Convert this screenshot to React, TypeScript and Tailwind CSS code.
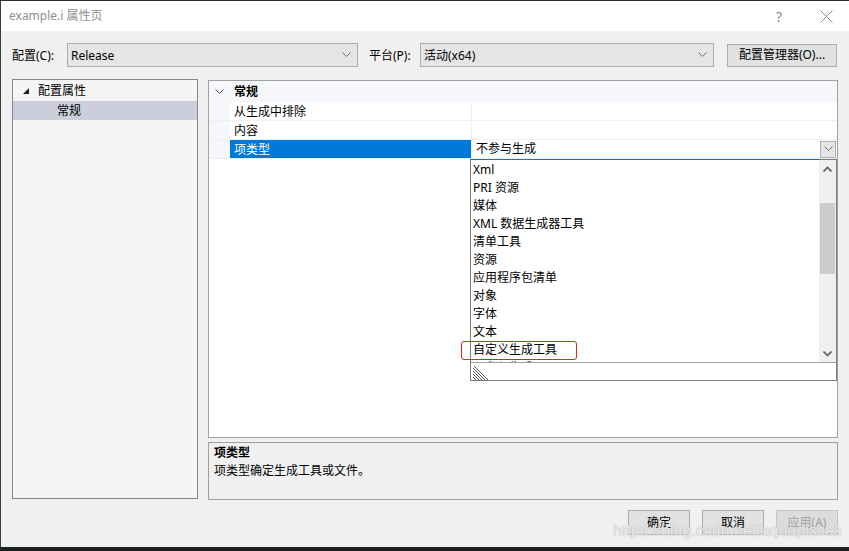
import React from 'react';

const items = [
  'Xml',
  'PRI 资源',
  '媒体',
  'XML 数据生成器工具',
  '清单工具',
  '资源',
  '应用程序包清单',
  '对象',
  '字体',
  '文本',
  '自定义生成工具',
  '不参与生成',
];

const Chevron = ({ up = false, bold = false, color = '#606060' }: { up?: boolean; bold?: boolean; color?: string }) => (
  <svg width="9" height="6" viewBox="0 0 9 6">
    <polyline
      points={up ? '0.5,5.5 4.5,1.5 8.5,5.5' : '0.5,0.5 4.5,4.5 8.5,0.5'}
      fill="none"
      stroke={color}
      strokeWidth={bold ? 1.7 : 1}
    />
  </svg>
);

const Combo = ({ value, width }: { value: string; width: string }) => (
  <div className={`flex h-[24px] items-center justify-between border border-[#acacac] bg-[#e5e5e5] pl-[3px] pr-[6px] ${width}`}>
    <span className="pt-px">{value}</span>
    <Chevron color="#707070" />
  </div>
);

const PropRow = ({ name, value, selected = false }: { name: string; value?: string; selected?: boolean }) => (
  <div className="flex h-[19px] border-b border-[#f0f0f0]">
    <div className="w-[21px] bg-[#f5f7fa]" />
    <div className={`w-[241px] pl-[4px] leading-[20px] ${selected ? 'bg-[#0078d7] text-white' : ''}`}>{name}</div>
    <div className="flex flex-1 items-center justify-between border-l border-[#f0f0f0] pl-[4px] leading-[20px]">
      <span>{value}</span>
      {selected && (
        <div className="mr-px flex h-[17px] w-[16px] items-center justify-center border border-[#adadad] bg-[#e5e5e5]">
          <Chevron color="#707070" />
        </div>
      )}
    </div>
  </div>
);

export default function App() {
  return (
    <div className="relative flex h-[551px] w-[849px] flex-col overflow-hidden bg-[#f0f0f0] font-['Noto_Sans','Noto_Sans_CJK_SC',sans-serif] text-[12px] text-black">
      <div className="h-px bg-[#2d2d2d]" />
      <div className="flex flex-1 flex-col border-l border-[#34403a]">
        {/* Title bar */}
        <div className="flex h-[30px] items-center justify-between bg-white pl-[8px]">
          <span className="text-[#8f8f8f]">example.i 属性页</span>
          <div className="flex items-center">
            <span className="mr-[38px] text-[14px] text-[#8a8a8a]">?</span>
            <svg width="13" height="13" viewBox="0 0 13 13" className="mr-[16px]">
              <path d="M0.5 0.5 L12.5 12.5 M12.5 0.5 L0.5 12.5" stroke="#8a8a8a" strokeWidth="1" />
            </svg>
          </div>
        </div>

        <div className="flex flex-1 flex-col pl-[11px]">
          {/* Config row */}
          <div className="mt-[12px] flex h-[24px] items-center">
            <span className="w-[55px] pt-px">配置(C):</span>
            <Combo value="Release" width="w-[291px]" />
            <span className="ml-[11px] w-[51px] pt-px">平台(P):</span>
            <Combo value="活动(x64)" width="w-[294px]" />
            <button className="ml-[13px] h-[23px] w-[110px] border border-[#adadad] bg-[#e1e1e1] text-[12px]">
              配置管理器(O)...
            </button>
          </div>

          {/* Panels */}
          <div className="mt-[12px] flex items-start">
            {/* Tree */}
            <div className="h-[420px] w-[186px] border border-[#828790] bg-[#f5f5f5]">
              <div className="flex h-[21px] items-center">
                <svg width="6" height="6" viewBox="0 0 6 6" className="ml-[10px]">
                  <polygon points="6,0 6,6 0,6" fill="#1e1e1e" />
                </svg>
                <span className="ml-[9px]">配置属性</span>
              </div>
              <div className="h-[19px] bg-[#cccedb] pl-[44px] leading-[20px]">常规</div>
            </div>

            {/* Right column */}
            <div className="ml-[10px] flex w-[630px] flex-col">
              <div className="relative mt-px h-[358px] border border-[#a0a0a0] bg-white">
                <div className="flex h-[21px] items-center bg-[#f5f7fa] pt-px">
                  <div className="flex w-[21px] justify-center">
                    <Chevron color="#505050" />
                  </div>
                  <span className="pl-[4px] font-bold">常规</span>
                </div>
                <PropRow name="从生成中排除" />
                <PropRow name="内容" />
                <PropRow name="项类型" value="不参与生成" selected />

                {/* Dropdown list */}
                <div className="absolute left-[261px] top-[78px] flex h-[222px] w-[367px] flex-col border border-[#7a7a7a] bg-white">
                  <div className="absolute left-[-1px] right-[17px] top-[-1px] h-px bg-[#0078d7]" />
                  <div className="flex h-[202px]">
                    <div className="flex-1 overflow-hidden pl-[2px]">
                      {items.map((it) => (
                        <div key={it} className="h-[18px] leading-[20px]">
                          {it}
                        </div>
                      ))}
                    </div>
                    <div className="flex w-[17px] flex-col bg-[#f0f0f0]">
                      <div className="flex h-[17px] items-center justify-center">
                        <Chevron up bold color="#606060" />
                      </div>
                      <div className="h-[26px]" />
                      <div className="mx-px h-[71px] bg-[#cdcdcd]" />
                      <div className="flex-1" />
                      <div className="flex h-[17px] items-center justify-center">
                        <Chevron bold color="#606060" />
                      </div>
                    </div>
                  </div>
                  <div className="h-px bg-[#a0a0a0]" />
                  <div className="flex flex-1 items-end pl-[2px]">
                    <svg width="15" height="15" viewBox="0 0 15 15">
                      <path
                        d="M0 3 L12 15 M0 6 L9 15 M0 9 L6 15 M0 12 L3 15 M1 1 L15 15"
                        stroke="#555"
                        strokeWidth="1"
                      />
                    </svg>
                  </div>
                </div>

                {/* Red highlight */}
                <div className="absolute left-[252px] top-[260px] h-[19px] w-[116px] rounded-[3px] border border-[#e8231f]" />
              </div>

              {/* Description */}
              <div className="mt-[4px] h-[58px] border border-[#a0a0a0] bg-[#f0f0f0] pl-[5px] pt-px leading-[18px]">
                <div className="font-bold">项类型</div>
                <div>项类型确定生成工具或文件。</div>
              </div>
            </div>
          </div>

          {/* Buttons */}
          <div className="mt-[10px] flex justify-end gap-[12px] pr-[11px]">
            <button className="h-[25px] w-[62px] border border-[#adadad] bg-[#e1e1e1] text-[12px]">确定</button>
            <button className="h-[25px] w-[62px] border border-[#adadad] bg-[#e1e1e1] text-[12px]">取消</button>
            <button className="h-[25px] w-[62px] border border-[#c4c4c4] bg-[#dcdcdc] text-[12px] text-[#a0a0a0]">
              应用(A)
            </button>
          </div>
        </div>
      </div>
      <div className="h-[4px] bg-[#1d211d]" />

      {/* Watermark */}
      <div className="absolute left-[613px] top-[519px] font-['Liberation_Sans',Arial,sans-serif] text-[16px] text-white/80 [text-shadow:0_0_1px_#8a8a8a]">
        https://blog.csdn.net/aquapisces
      </div>
    </div>
  );
}
